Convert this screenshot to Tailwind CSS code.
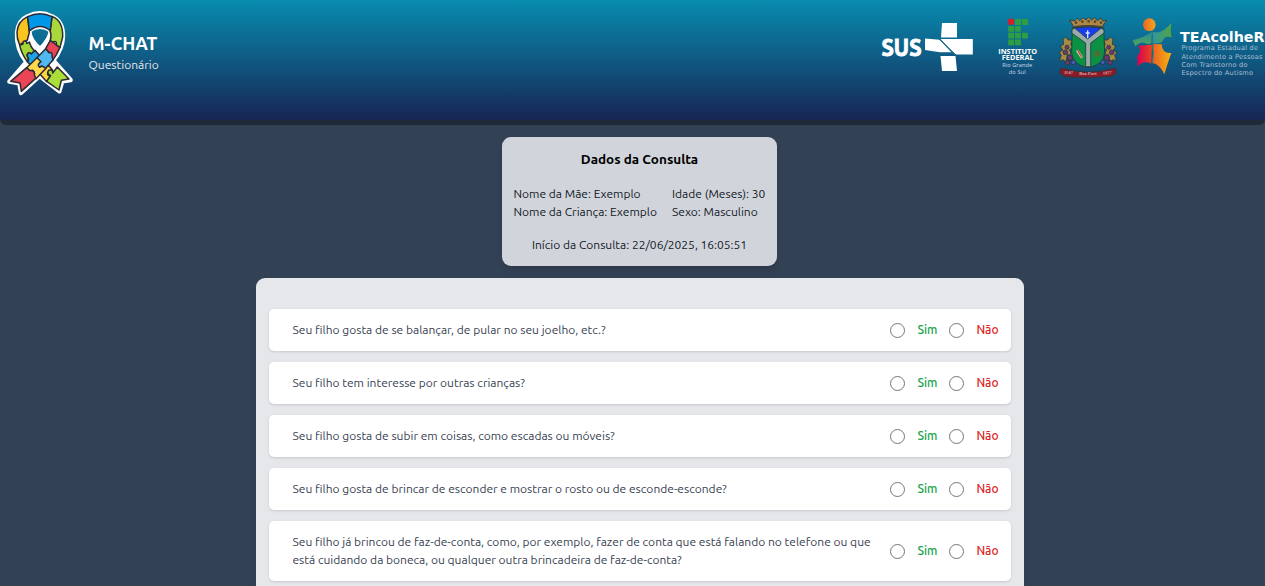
<!DOCTYPE html>
<html lang="pt-BR">
<head>
<meta charset="utf-8">
<title>M-CHAT</title>
<script src="https://cdn.jsdelivr.net/npm/@tailwindcss/browser@4"></script>
</head>
<body class="h-[586px] overflow-hidden bg-[#334155] font-[Ubuntu,'Noto_Sans',sans-serif] text-[12px] leading-[18px]">
<header class="flex h-[125px] w-[1265px] items-start rounded-b-[6px] border-b-[5px] border-[#1f2937] bg-[linear-gradient(to_bottom,#088caf_0px,#172554_120px)]">
  <svg class="mt-[5px] h-[95px] w-[80px] shrink-0" viewBox="0 0 240 285">
    <g stroke-linejoin="round" stroke="#fff" stroke-width="13" fill="#fff">
      <path fill-rule="evenodd" d="M83 34Q119 15 156 34Q190 50 189 95Q188 131 160 166L212 225L187 229L178 259L119 213L63 264L58 235L28 230L79 171Q48 132 51 82Q55 46 83 34ZM88 76Q88 105 120 132Q152 102 152 76Q120 55 88 76Z"/>
    </g>
    <g stroke="#292a35" stroke-width="4.5" stroke-linejoin="round">
      <path fill="#f9c51e" d="M83 35Q52 50 51 82Q50 101 59 120L82 105L88 82Z"/>
      <path fill="#a3d733" d="M59 121L69 117Q68 103 80 111Q78 120 88 111Q91 125 103 138L94 147Q85 138 81 150Q88 158 82 170Q65 147 59 121Z"/>
      <path fill="#1fa2e5" d="M82 170Q90 164 81 153Q84 138 94 147L105 136L123 156L98 187Z"/>
      <path fill="#ffd63c" d="M119 206L145 180L158 196Q140 195 143 209Q146 214 152 211L140 230Z"/>
      <path fill="#a9df36" d="M140 229L152 212Q139 206 146 196Q159 192 158 204L172 186L207 222L184 226L177 255Z"/>
      <path fill="#ea4354" d="M137 131L151 106L180 127Q170 150 158 166L151 157Q158 147 147 142Z"/>
      <path fill="#a9d83a" d="M156 34Q190 47 188 96L180 127L169 120Q172 105 158 111L151 106Q155 89 150 76Z"/>
      <path fill="#0097e9" d="M83 35Q120 17 156 35L151 77Q120 52 88 78Z"/>
      <path fill="#50b9ef" d="M137 131L147 143Q158 140 156 153L159 165L132 195L122 184Q111 188 113 174L111 158Z"/>
      <path fill="#ffd84b" d="M111 158L123 170Q109 180 119 187L126 183L138 190L108 221L99 215Q109 205 98 196L85 200L80 188Z"/>
      <path fill="#eb4555" d="M80 188L90 197Q104 194 103 209L107 220L64 259L60 234L32 229Z"/>
    </g>
  </svg>
  <div class="ml-[8.500px] mt-[30px] text-white">
    <h1 class="text-[18px] font-semibold leading-[27px]">M-CHAT</h1>
    <p class="-mt-px text-[12px] leading-[18px] text-[#e5e7eb]">Questionário</p>
  </div>
  <div class="ml-auto flex items-start">
    <svg class="mt-[20px] h-[55px] w-[96px]" viewBox="0 0 96 55">
      <text x="2.500" y="35.800" textLength="40" lengthAdjust="spacingAndGlyphs" fill="#fff" stroke="#fff" stroke-width=".9" font-family="Ubuntu, sans-serif" font-weight="700" font-size="23.500">SUS</text>
      <g fill="#fff" transform="translate(-1 0)"><path d="M64 3h15v14.500H63z"/><path d="M47 18.500l14.500 1.200 12 12.500H62L47 30z"/><path d="M62.500 19h32.300v15.500H77z"/><path d="M62.500 36h15l1.500 15H64z"/><path d="M61 19l17 16" stroke="#17668f" stroke-width="1"/></g>
    </svg>
    <svg class="ml-[18px] mt-[17px] h-[62px] w-[45px]" viewBox="-0.700 0 45 62">
      <circle cx="17.300" cy="4.800" r="3.300" fill="#d0202e"/>
      <g fill="#2f9e41"><path d="M21.300 2h5.900v5.900h-5.900zM28.300 2h5.900v5.900h-5.900zM14.500 8.900h5.900v5.900h-5.900zM21.300 8.900h5.900v5.900h-5.900zM14.500 15.700h5.900v5.900h-5.900zM21.300 15.700h5.900v5.900h-5.900zM28.300 15.700h5.900v5.900h-5.900zM14.500 22.400h5.900v5.900h-5.900zM21.300 22.400h5.900v5.900h-5.900z"/></g>
      <g fill="#fff" font-family="Open Sans, sans-serif" text-anchor="middle">
        <text x="24" y="36.700" font-size="7.400" font-weight="700" textLength="39" lengthAdjust="spacingAndGlyphs">INSTITUTO</text>
        <text x="24" y="43.200" font-size="7.400" font-weight="700" textLength="32" lengthAdjust="spacingAndGlyphs">FEDERAL</text>
        <text x="23.500" y="50.300" font-size="5.700" fill="#cbd9e6" textLength="30">Rio Grande</text>
        <text x="23.500" y="56.500" font-size="5.700" fill="#cbd9e6" textLength="17">do Sul</text>
      </g>
    </svg>
    <svg class="ml-[17px] mt-[10px] h-[72px] w-[68px]" viewBox="0 0 204 216">
      <g stroke="#263a3b" stroke-width="2.500">
        <g fill="#a88b43"><path d="M24 87l8-6 8 9 12 0-5 14 8 8-12 7 8 17-14-2-4 24-8-9-12 4 6-17-7-10 11-5-7-13 10-5z"/><path d="M174 87l-8-6-8 9-12 0 5 14-8 8 12 7-8 17 14-2 4 24 8-9 12 4-6-17 7-10-11-5 7-13-10-5z"/></g>
        <g fill="#743577"><circle cx="36" cy="112" r="6"/><circle cx="31" cy="127" r="7"/><circle cx="45" cy="143" r="8"/><circle cx="37" cy="158" r="7"/><circle cx="161" cy="112" r="6"/><circle cx="170" cy="127" r="7"/><circle cx="155" cy="143" r="8"/><circle cx="165" cy="158" r="7"/></g>
        <g fill="#4059b4"><circle cx="53" cy="133" r="6"/><circle cx="55" cy="157" r="7"/><circle cx="145" cy="133" r="6"/><circle cx="143" cy="157" r="7"/></g>
        <path fill="#8d1927" d="M18 174Q99 198 181 174L184 188 171 199Q100 207 30 200L14 189Z"/>
        <path fill="#0a9143" d="M52 53Q99 47 146 53L149 127Q147 165 99 173Q53 165 50 127Z"/>
        <path fill="#173eee" d="M58 54Q99 47 140 54L141 65 98 93 56 65Z"/>
        <path fill="#98aaa9" d="M51 58l9-3 38 32 40-32 9 4v10l-40 30v71H92V99L51 70Z"/>
        <path fill="#ac8747" d="M57 52L44 30l15 3 7-9 8 8 10-9 9 7 8-8 9 8 9-7 9 9 10-8 6 9 11-3-15 22Q99 45 57 52Z"/>
      </g>
      <path d="M56 51Q99 43 143 51" fill="none" stroke="#4d4430" stroke-width="4"/>
      <g fill="#59482c"><circle cx="63" cy="38" r="4"/><circle cx="82" cy="35" r="4"/><circle cx="101" cy="34" r="4"/><circle cx="120" cy="35" r="4"/><circle cx="138" cy="38" r="4"/></g>
      <path d="M98 61v24M92 69h12" stroke="#dce5f7" stroke-width="4"/>
      <path d="M66 121l15 22" stroke="#d8b29b" stroke-width="8"/><path d="M68 120l12 22" stroke="#b03d36" stroke-width="3"/>
      <path d="M116 140l21-21m-19 6 18 10m-12-14 5 23m-13-8 24-4" stroke="#745d2e" stroke-width="3"/>
      <g fill="#cfb5b8" font-family="Liberation Serif, serif" font-weight="bold" font-size="13"><text x="27" y="191" transform="rotate(5 27 191)" textLength="27">11-07</text><text x="73" y="196" textLength="51">Boa Pavi</text><text x="144" y="194" transform="rotate(-5 144 194)" textLength="26">1977</text></g>
    </svg>
    <svg class="ml-[5px] mt-[12px] h-[68px] w-[50px]" viewBox="0 0 150 204">
      <defs>
        <linearGradient id="head"><stop stop-color="#ed6722"/><stop offset="1" stop-color="#f3a51e"/></linearGradient>
        <linearGradient id="armLeft" x2="0" y2="1"><stop stop-color="#298d9b"/><stop offset="1" stop-color="#50a653"/></linearGradient>
        <linearGradient id="armRight"><stop stop-color="#3295a0"/><stop offset="1" stop-color="#51a53e"/></linearGradient>
        <linearGradient id="legLeft"><stop stop-color="#dc0051"/><stop offset="1" stop-color="#e64720"/></linearGradient>
        <linearGradient id="legRight"><stop stop-color="#eb6221"/><stop offset="1" stop-color="#f6b510"/></linearGradient>
      </defs>
      <circle cx="64" cy="38" r="19" fill="url(#head)"/>
      <path fill="url(#armLeft)" d="M14 85Q50 75 72 60L70 94Q62 99 52 94Q39 87 22 103Q18 94 14 85Z"/>
      <path fill="url(#armRight)" d="M75 60Q101 68 130 33Q126 60 131 76Q110 70 104 86Q101 96 74 94Z"/>
      <path fill="url(#legLeft)" d="M30 101L72 98L70 155Q47 143 29 164Q29 151 28 132Q44 117 30 101Z"/>
      <path fill="url(#legRight)" d="M76 96L101 97Q103 126 130 123Q121 147 109 187Q96 158 74 153Z"/>
      <path d="M74 58Q69 79 73 97Q79 124 73 155" fill="none" stroke="#347b79" stroke-width="3"/>
    </svg>
    <svg class="mt-[26px] h-[54px] w-[87px]" viewBox="0 0 87 54">
      <g font-family="DejaVu Sans, sans-serif">
        <text x="2" y="16" font-size="13.300" font-weight="bold" fill="#fff" textLength="84.500" lengthAdjust="spacingAndGlyphs">TEAcolheR</text>
        <g font-size="6.600" fill="#a9bfd3">
          <text x="3.500" y="24" textLength="76.500">Programa Estadual de</text>
          <text x="3.500" y="33" textLength="81">Atendimento a Pessoas</text>
          <text x="3.500" y="41" textLength="66">Com Transtorno do</text>
          <text x="3.500" y="49" textLength="71.500">Espectro do Autismo</text>
        </g>
      </g>
    </svg>
  </div>
</header>
<main class="flex w-[1265px] flex-col items-center pl-[15px] pt-[12px]">
  <section class="mr-px h-[129px] w-[275px] rounded-[9px] bg-[#d1d5db] px-[11.500px] pt-[12px] text-[#111827] shadow-md">
    <h2 class="text-center text-[13.500px] font-bold leading-[21px] text-black">Dados da Consulta</h2>
    <div class="mt-[15px] grid grid-cols-[158.500px_1fr] whitespace-nowrap">
      <p>Nome da Mãe: Exemplo</p><p>Idade (Meses): 30</p>
      <p>Nome da Criança: Exemplo</p><p>Sexo: Masculino</p>
    </div>
    <p class="mt-[15px] text-center">Início da Consulta: 22/06/2025, 16:05:51</p>
  </section>
  <section class="mt-[12px] flex w-[768px] flex-col gap-[11px] rounded-t-[9px] bg-[#e5e7eb] pb-[12px] pl-[12.500px] pr-[13px] pt-[31px] text-[#374151] shadow-lg" id="perguntas"></section>
</main>
<script>
const perguntas = [
  'Seu filho gosta de se balançar, de pular no seu joelho, etc.?',
  'Seu filho tem interesse por outras crianças?',
  'Seu filho gosta de subir em coisas, como escadas ou móveis?',
  'Seu filho gosta de brincar de esconder e mostrar o rosto ou de esconde-esconde?',
  'Seu filho já brincou de faz-de-conta, como, por exemplo, fazer de conta que está falando no telefone ou que<br>está cuidando da boneca, ou qualquer outra brincadeira de faz-de-conta?'
];
document.getElementById('perguntas').innerHTML = perguntas.map(p => `
<div class="flex items-center rounded-[5px] bg-white py-[12px] pl-[24px] pr-[12px] shadow-sm">
  <p class="whitespace-nowrap">${p}</p>
  <div class="ml-auto flex w-[109px] shrink-0 items-center font-medium">
    <i class="mt-px size-[15px] rounded-full border border-[#767676]"></i><span class="ml-[12.400px] w-[31.600px] text-[#16a34a]">Sim</span>
    <i class="mt-px size-[15px] rounded-full border border-[#767676]"></i><span class="ml-[12.400px] text-[#dc2626]">Não</span>
  </div>
</div>`).join('');
</script>
</body>
</html>
